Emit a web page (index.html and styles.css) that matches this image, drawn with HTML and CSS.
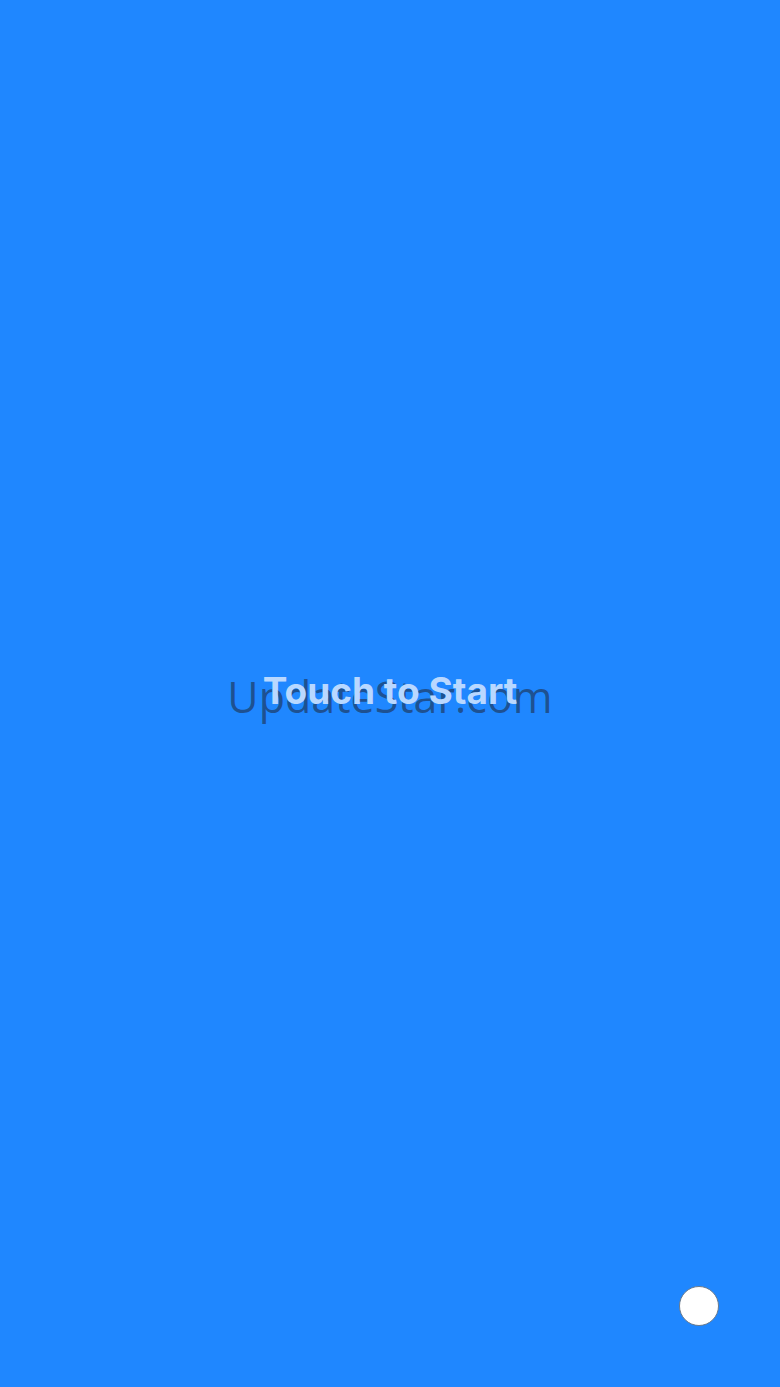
FILE: index.html
```html
<!DOCTYPE html>
<html>
<head>
<meta charset="utf-8">
<link rel="stylesheet" href="styles.css">
</head>
<body>
<main class="screen">
  <div class="center">
    <div class="start">Touch to Start</div>
    <div class="watermark">UpdateStar.com</div>
  </div>
  <div class="dot"></div>
</main>
</body>
</html>
```
FILE: styles.css
```css
html, body {
  margin: 0;
  padding: 0;
  width: 780px;
  height: 1387px;
  overflow: hidden;
}
.screen {
  position: relative;
  width: 780px;
  height: 1387px;
  background: #1f87ff;
  display: grid;
  place-items: center;
}
.center {
  display: grid;
  place-items: center;
  margin-top: 6px;
}
.start, .watermark {
  grid-area: 1 / 1;
  white-space: nowrap;
}
.start {
  font-family: "Inter", "Noto Sans", sans-serif;
  font-weight: 700;
  font-size: 37px;
  color: #b9d8ff;
  transform: translateY(-6px);
}
.watermark {
  font-family: "Open Sans", "Noto Sans", sans-serif;
  font-size: 43px;
  color: rgba(30, 45, 70, 0.6);
}
.dot {
  position: absolute;
  left: 679px;
  top: 1286px;
  width: 38px;
  height: 38px;
  border-radius: 50%;
  background: #ffffff;
  border: 1px solid #6a7a8c;
}
```
